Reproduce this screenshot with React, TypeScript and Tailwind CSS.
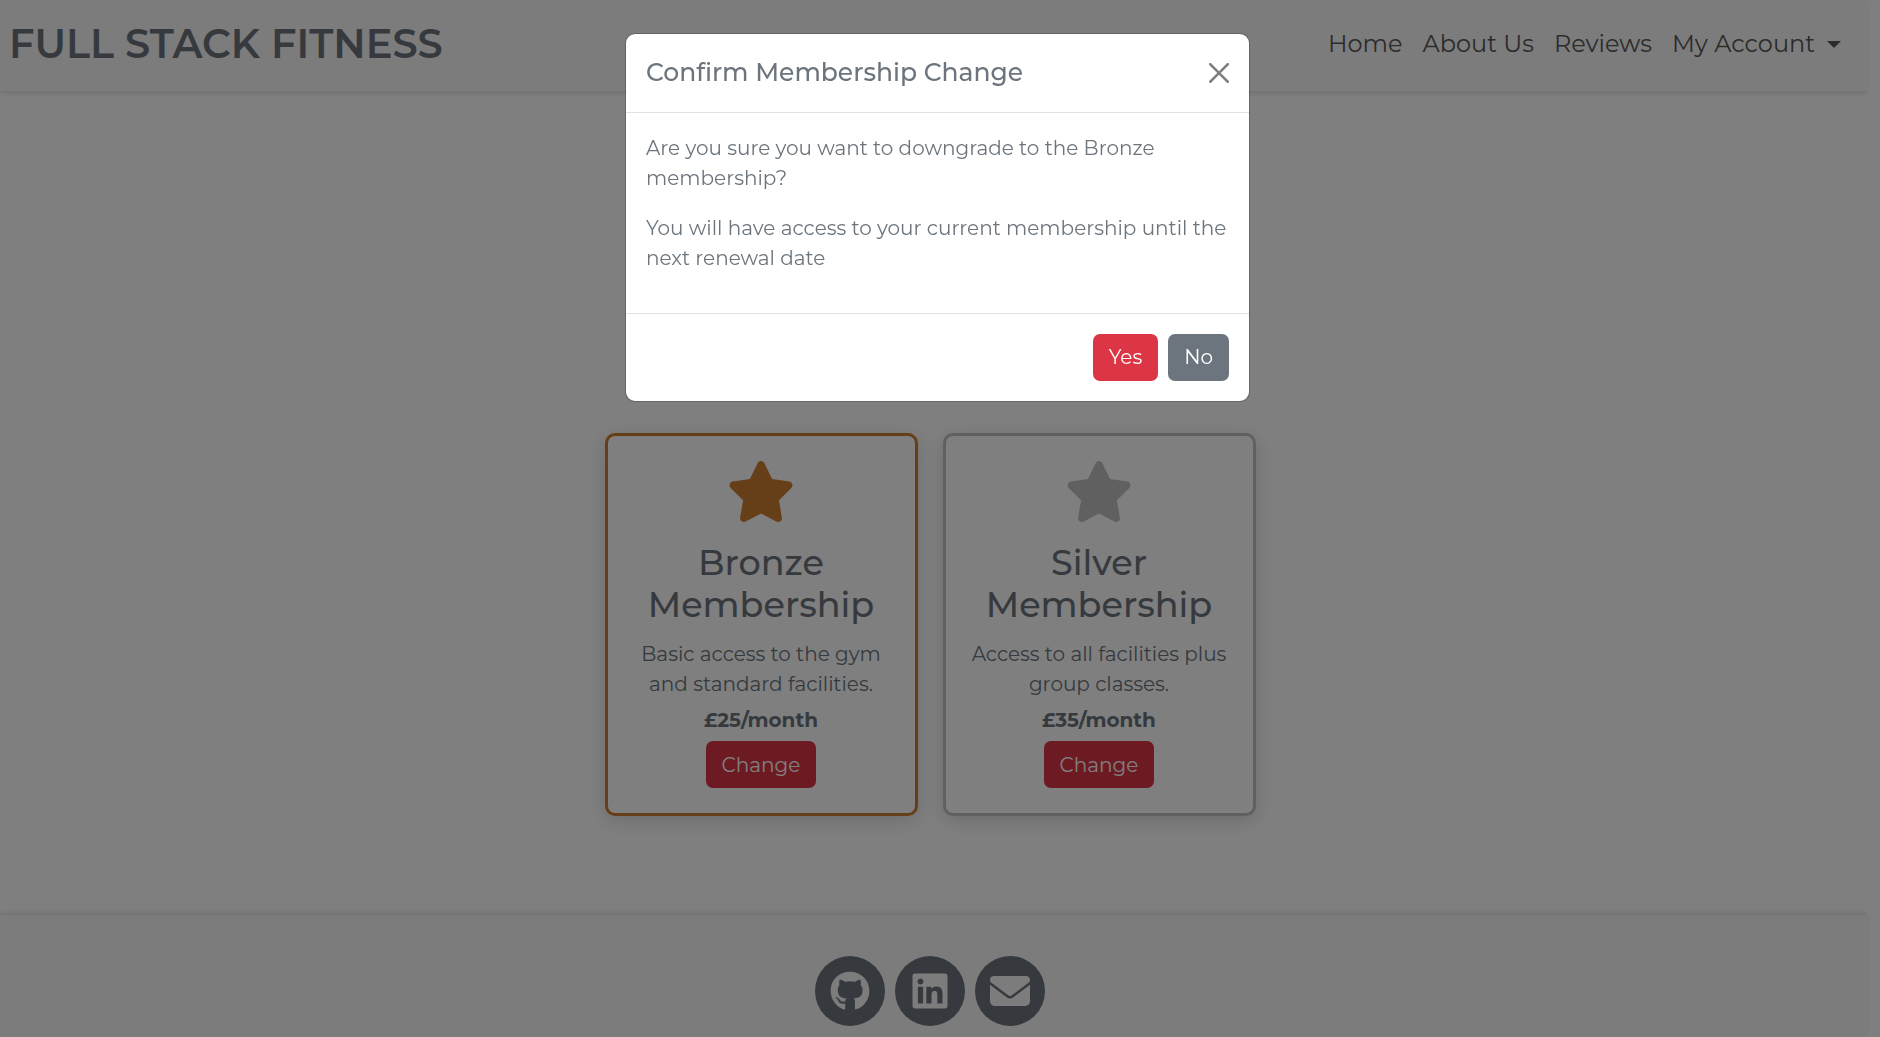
import { FaEnvelope, FaGithub, FaLinkedin, FaStar } from "react-icons/fa6";
import type { IconType } from "react-icons";

type Plan = {
  id: string;
  name: string;
  description: string;
  price: string;
  border: string;
  star: string;
};

const plans: Plan[] = [
  {
    id: "bronze",
    name: "Bronze Membership",
    description: "Basic access to the gym and standard facilities.",
    price: "£25/month",
    border: "border-[#cd7f32]",
    star: "text-[#cd7f32]",
  },
  {
    id: "silver",
    name: "Silver Membership",
    description: "Access to all facilities plus group classes.",
    price: "£35/month",
    border: "border-[#c0c0c0]",
    star: "text-[#c0c0c0]",
  },
];

const links = ["Home", "About Us", "Reviews"];

const socials: { label: string; Icon: IconType }[] = [
  { label: "GitHub", Icon: FaGithub },
  { label: "LinkedIn", Icon: FaLinkedin },
  { label: "Email", Icon: FaEnvelope },
];

function Header() {
  return (
    <header className="flex h-[91px] items-center justify-between bg-[#f8f8f8] pr-[26px] pb-[3px] pl-[9px] shadow-[0_3px_4px_rgba(0,0,0,0.1)]">
      <a href="#" className="text-[40px] leading-[60px] font-semibold">
        FULL STACK FITNESS
      </a>
      <nav className="flex gap-5 text-[24px] leading-[38px] text-[#585858]">
        {links.map((label) => (
          <a key={label} href="#">
            {label}
          </a>
        ))}
        <button type="button" className="flex items-center gap-3">
          My Account
          <span className="border-x-[7px] border-t-[7px] border-x-transparent border-t-[#585858]" />
        </button>
      </nav>
    </header>
  );
}

function PlanCard({ plan }: { plan: Plan }) {
  return (
    <section
      aria-labelledby={plan.id}
      className={`flex w-[313px] flex-col items-center rounded-[10px] border-[3px] bg-white px-[25px] pt-[25px] pb-[25px] text-center shadow-[0_5px_19px_rgba(0,0,0,0.15)] ${plan.border}`}
    >
      <FaStar className={`h-[61px] w-[70px] ${plan.star}`} aria-hidden />
      <h3 id={plan.id} className="mt-5 text-[35px] leading-[42px] font-medium">
        {plan.name}
      </h3>
      <p className="mt-[13px] text-[20px] leading-[30px]">{plan.description}</p>
      <p className="mt-1.5 text-[20px] leading-[30px] font-bold">{plan.price}</p>
      <button
        type="button"
        className="mt-1.5 h-[47px] rounded-[7px] bg-[#dc3545] px-4 text-[20px] leading-[30px] text-white"
      >
        Change
      </button>
    </section>
  );
}

function Footer() {
  return (
    <footer className="flex justify-center gap-2.5 bg-[#f8f8f8] pt-[41px] pr-[7px] pb-[11px] shadow-[0_-3px_4px_rgba(0,0,0,0.1)]">
      {socials.map(({ label, Icon }) => (
        <a
          key={label}
          href="#"
          aria-label={label}
          className="flex size-[70px] items-center justify-center rounded-full bg-[#6c757d] text-[40px] text-[#f8f8f8]"
        >
          <Icon />
        </a>
      ))}
    </footer>
  );
}

function ConfirmDialog() {
  return (
    <div className="fixed inset-0 flex items-start justify-center bg-black/50 pt-[33px] pr-[5px]">
      <div
        role="dialog"
        aria-modal="true"
        aria-labelledby="dialog-title"
        className="w-[625px] rounded-[10px] border border-black/20 bg-white bg-clip-padding"
      >
        <div className="flex h-[79px] items-center justify-between border-b border-[#dee2e6] px-5">
          <h2 id="dialog-title" className="pb-0.5 text-[25px] leading-[38px] font-medium">
            Confirm Membership Change
          </h2>
          <button type="button" aria-label="Close" className="opacity-50">
            <svg viewBox="0 0 16 16" className="size-5" fill="#000" aria-hidden>
              <path d="M.293.293a1 1 0 0 1 1.414 0L8 6.586 14.293.293a1 1 0 1 1 1.414 1.414L9.414 8l6.293 6.293a1 1 0 0 1-1.414 1.414L8 9.414l-6.293 6.293a1 1 0 0 1-1.414-1.414L6.586 8 .293 1.707a1 1 0 0 1 0-1.414z" />
            </svg>
          </button>
        </div>
        <div className="flex flex-col gap-5 px-5 pt-5 pb-10 text-[20px] leading-[30px]">
          <p>Are you sure you want to downgrade to the Bronze membership?</p>
          <p>You will have access to your current membership until the next renewal date</p>
        </div>
        <div className="flex justify-end gap-2.5 border-t border-[#dee2e6] p-5 text-[20px] leading-[30px] text-white">
          <button type="button" className="h-[47px] rounded-[7px] bg-[#dc3545] px-4 pb-0.5">
            Yes
          </button>
          <button type="button" className="h-[47px] rounded-[7px] bg-[#6c757d] px-4 pb-0.5">
            No
          </button>
        </div>
      </div>
    </div>
  );
}

export default function App() {
  return (
    <div className="bg-white font-[Montserrat,Inter,sans-serif] text-[#6c757d]">
      <div className="flex min-h-screen flex-col pr-[13px]">
        <Header />
        <main className="flex flex-1 flex-wrap justify-center gap-[25px] pt-[342px] pr-[7px] pb-[99px]">
          {plans.map((plan) => (
            <PlanCard key={plan.id} plan={plan} />
          ))}
        </main>
        <Footer />
      </div>
      <ConfirmDialog />
    </div>
  );
}
